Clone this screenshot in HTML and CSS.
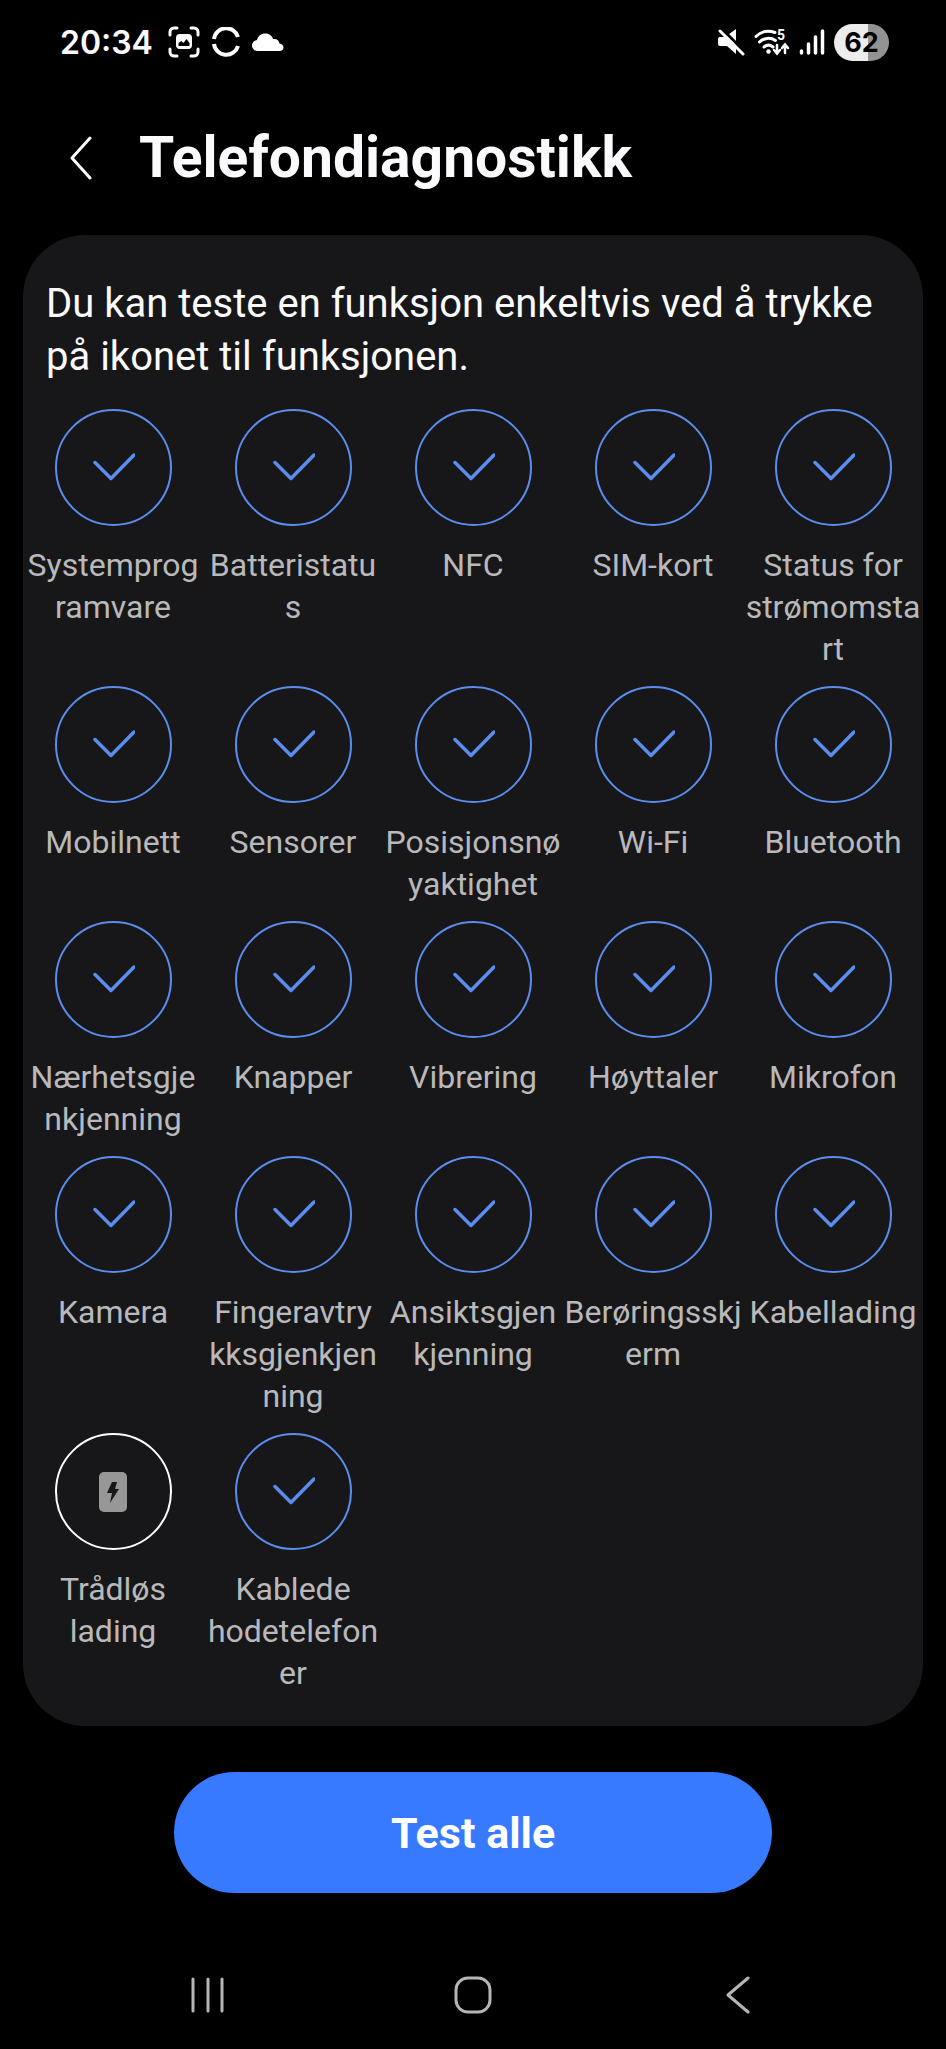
FILE: index.html
```html
<!doctype html>
<html lang="nb">
<head>
  <meta charset="UTF-8">
  <meta name="viewport" content="width=device-width, initial-scale=1">
  <title>Telefondiagnostikk</title>
  <link rel="stylesheet" href="styles.css">
</head>
<body>
  <svg class="symbols" aria-hidden="true">
    <symbol id="check" viewBox="0 0 44 32">
      <path d="M4 10.500 20 26.500 43 3" fill="none" stroke="currentColor" stroke-width="3.500" stroke-linecap="round" stroke-linejoin="round"/>
    </symbol>
  </svg>

  <div class="status-bar">
    <div class="status-left">
      <span class="clock">20:34</span>
      <svg width="32" height="32" viewBox="0 0 32 32">
        <path d="M2 9V6a4 4 0 0 1 4-4h3M23 2h3a4 4 0 0 1 4 4v3M30 23v3a4 4 0 0 1-4 4h-3M9 30H6a4 4 0 0 1-4-4v-3" fill="none" stroke="#fff" stroke-width="3" stroke-linecap="round"/>
        <rect x="8" y="8" width="16" height="15" rx="4" fill="#fff"/>
        <path d="M10.500 20v-3l3-2 2 2 3-4 3 4v3z" fill="#000"/>
      </svg>
      <svg width="28" height="30" viewBox="0 0 28 30">
        <path d="M2 12A12.300 12.300 0 0 1 26 10M2 17A12.300 12.300 0 0 0 26 19" fill="none" stroke="#fff" stroke-width="4"/>
      </svg>
      <svg width="32" height="18" viewBox="0 0 32 18">
        <path d="M6 18a5.500 5.500 0 0 1-1-11C6 3 9 .5 13 .5c4 0 7 2 8 5.500 4-.5 6 1.500 6.500 4.500 2.500.5 4 2 4 4s-1.500 3.500-4 3.500z" fill="#fff"/>
      </svg>
    </div>
    <div class="status-right">
      <svg width="28" height="28" viewBox="0 0 28 28">
        <path d="M2 9h6l11-8v25l-9-8H3a2 2 0 0 1-2-2v-5z" fill="#fff"/>
        <path d="M5 1 28 24" stroke="#000" stroke-width="3"/>
        <path d="M3 3 26 26" stroke="#fff" stroke-width="3" stroke-linecap="round"/>
      </svg>
      <svg width="36" height="28" viewBox="0 0 36 28">
        <g fill="none" stroke="#fff" stroke-width="3" stroke-linecap="round">
          <path d="M2 8.500C7 3.500 14 2 21 4.500M5.500 14c4-4 11-5 16-1.500M10 19c3-2.500 6-2.500 9 0"/>
          <path d="M23 17v8M20 22l3 3.500 3-3.500M31 25v-8M28 20l3-3.500 3 3.500" stroke-width="2.500"/>
        </g>
        <circle cx="14.500" cy="23.500" r="2.200" fill="#fff"/>
        <text x="23" y="12" class="wifi-band">5</text>
      </svg>
      <svg width="26" height="28" viewBox="0 0 26 28">
        <path d="M2.500 25v-2M9.500 25V16M16.500 25V9M23.500 25V3" stroke="#fff" stroke-width="3.500" stroke-linecap="round"/>
      </svg>
      <span class="battery">62</span>
    </div>
  </div>

  <header class="app-header">
    <button class="back" aria-label="Tilbake">
      <svg width="24" height="44" viewBox="0 0 24 44">
        <path d="M21 2 3 22l18 20" fill="none" stroke="#fff" stroke-width="3" stroke-linecap="round" stroke-linejoin="round"/>
      </svg>
    </button>
    <h1>Telefondiagnostikk</h1>
  </header>

  <main class="card">
    <p class="intro">Du kan teste en funksjon enkeltvis ved å trykke på ikonet til funksjonen.</p>
    <div class="test-grid">
      <button class="test"><span class="ring"><svg class="check"><use href="#check"/></svg></span>Systemprog<br>ramvare</button>
      <button class="test"><span class="ring"><svg class="check"><use href="#check"/></svg></span>Batteristatu<br>s</button>
      <button class="test"><span class="ring"><svg class="check"><use href="#check"/></svg></span>NFC</button>
      <button class="test"><span class="ring"><svg class="check"><use href="#check"/></svg></span>SIM-kort</button>
      <button class="test"><span class="ring"><svg class="check"><use href="#check"/></svg></span>Status for<br>strømomsta<br>rt</button>

      <button class="test"><span class="ring"><svg class="check"><use href="#check"/></svg></span>Mobilnett</button>
      <button class="test"><span class="ring"><svg class="check"><use href="#check"/></svg></span>Sensorer</button>
      <button class="test"><span class="ring"><svg class="check"><use href="#check"/></svg></span>Posisjonsnø<br>yaktighet</button>
      <button class="test"><span class="ring"><svg class="check"><use href="#check"/></svg></span>Wi-Fi</button>
      <button class="test"><span class="ring"><svg class="check"><use href="#check"/></svg></span>Bluetooth</button>

      <button class="test"><span class="ring"><svg class="check"><use href="#check"/></svg></span>Nærhetsgje<br>nkjenning</button>
      <button class="test"><span class="ring"><svg class="check"><use href="#check"/></svg></span>Knapper</button>
      <button class="test"><span class="ring"><svg class="check"><use href="#check"/></svg></span>Vibrering</button>
      <button class="test"><span class="ring"><svg class="check"><use href="#check"/></svg></span>Høyttaler</button>
      <button class="test"><span class="ring"><svg class="check"><use href="#check"/></svg></span>Mikrofon</button>

      <button class="test"><span class="ring"><svg class="check"><use href="#check"/></svg></span>Kamera</button>
      <button class="test"><span class="ring"><svg class="check"><use href="#check"/></svg></span>Fingeravtry<br>kksgjenkjen<br>ning</button>
      <button class="test"><span class="ring"><svg class="check"><use href="#check"/></svg></span>Ansiktsgjen<br>kjenning</button>
      <button class="test"><span class="ring"><svg class="check"><use href="#check"/></svg></span>Berøringsskj<br>erm</button>
      <button class="test"><span class="ring"><svg class="check"><use href="#check"/></svg></span>Kabellading</button>

      <button class="test">
        <span class="ring ring-pending">
          <svg width="28" height="40" viewBox="0 0 28 40">
            <rect width="28" height="40" rx="5" fill="#979797"/>
            <path d="M13 10h5l-2 7h4l-9 14 2-10H8z" fill="#171719"/>
          </svg>
        </span>Trådløs<br>lading
      </button>
      <button class="test"><span class="ring"><svg class="check"><use href="#check"/></svg></span>Kablede<br>hodetelefon<br>er</button>
    </div>
  </main>

  <button class="test-all">Test alle</button>

  <nav class="nav-bar">
    <button aria-label="Siste apper">
      <svg width="34" height="38" viewBox="0 0 34 38">
        <path d="M2 3v32M17 3v32M31 3v32" stroke="#b5b5b5" stroke-width="3" stroke-linecap="round"/>
      </svg>
    </button>
    <button aria-label="Hjem">
      <svg width="38" height="38" viewBox="0 0 38 38">
        <rect x="2" y="2" width="34" height="34" rx="12" fill="none" stroke="#b5b5b5" stroke-width="3"/>
      </svg>
    </button>
    <button aria-label="Tilbake">
      <svg width="24" height="38" viewBox="0 0 24 38">
        <path d="M22 2 2 19l20 17" fill="none" stroke="#b5b5b5" stroke-width="3" stroke-linecap="round" stroke-linejoin="round"/>
      </svg>
    </button>
  </nav>
</body>
</html>
```
FILE: styles.css
```css
* {
  box-sizing: border-box;
}

body {
  margin: 0;
  background-color: #000;
  color: #fafafc;
  font-family: Roboto, "Open Sans", sans-serif;
}

h1, p {
  margin: 0;
}

button {
  padding: 0;
  border: none;
  background: none;
  color: inherit;
  font-family: inherit;
  cursor: pointer;
}

svg {
  display: block;
}

.symbols {
  position: absolute;
  width: 0;
  height: 0;
}

/* status bar */
.status-bar {
  display: flex;
  justify-content: space-between;
  align-items: center;
  height: 84px;
  padding: 0 57px 0 60px;
}

.status-left,
.status-right {
  display: flex;
  align-items: center;
}

.status-left {
  gap: 12px;
}

.status-right {
  gap: 9px;
}

.clock {
  margin-right: 3px;
  font-family: Inter, sans-serif;
  font-size: 32px;
  font-weight: 600;
}

.wifi-band {
  font-size: 14px;
  font-weight: 700;
  fill: #fff;
}

.battery {
  width: 55px;
  border-radius: 19px;
  background: linear-gradient(to right, #ececec 62%, #939393 62%);
  color: #000;
  font-family: Inter, sans-serif;
  font-size: 27px;
  font-weight: 700;
  line-height: 37px;
  text-align: center;
}

/* title */
.app-header {
  display: flex;
  align-items: center;
  gap: 46px;
  height: 151px;
  padding: 0 69px 4px;
}

.app-header h1 {
  font-size: 57px;
  font-weight: 700;
  line-height: 72px;
}

/* tests */
.card {
  margin: 0 23px;
  padding: 42px 0 32px;
  border-radius: 62px;
  background-color: #171719;
}

.intro {
  padding: 0 23px;
  font-size: 40px;
  line-height: 53px;
}

.test-grid {
  display: grid;
  grid-template-columns: repeat(5, 1fr);
  row-gap: 16px;
  margin-top: 26px;
}

.test {
  display: flow-root;
  align-self: start;
  color: #b9b9bb;
  font-size: 32px;
  line-height: 42px;
  text-align: center;
}

.ring {
  display: flex;
  justify-content: center;
  align-items: center;
  width: 117px;
  height: 117px;
  margin: 0 auto 18px;
  border: 2px solid #5b8def;
  border-radius: 50%;
  color: #5b8def;
}

.ring-pending {
  border-color: #fff;
}

.check {
  width: 44px;
  height: 32px;
}

.test-all {
  display: block;
  width: 598px;
  max-width: 90%;
  height: 121px;
  margin: 46px auto 0;
  border-radius: 61px;
  background-color: #387aff;
  color: #fff;
  font-size: 43px;
  font-weight: 700;
}

/* system navigation */
.nav-bar {
  display: flex;
  justify-content: space-around;
  align-items: center;
  height: 108px;
  margin-top: 48px;
  padding: 0 76px;
}

.nav-bar button {
  display: flex;
  justify-content: center;
  width: 60px;
}
```
